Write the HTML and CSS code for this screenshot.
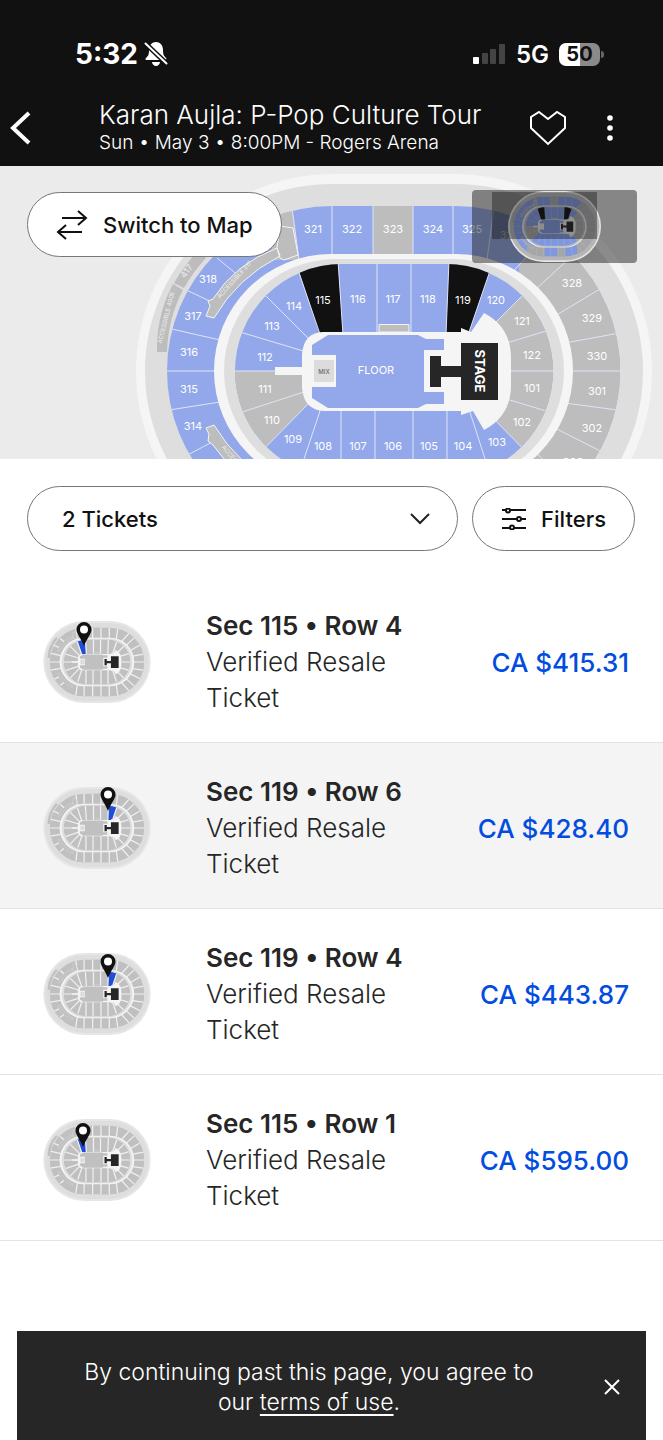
FILE: index.html
```html
<!DOCTYPE html>
<html lang="en">
<head>
<meta charset="utf-8">
<meta name="viewport" content="width=device-width, initial-scale=1">
<title>Karan Aujla: P-Pop Culture Tour</title>
<link rel="stylesheet" href="styles.css">
</head>
<body>
<svg class="defs" aria-hidden="true">
  <defs>
    <clipPath id="clip-upper"><rect x="167" y="206" width="453" height="330" rx="165"/></clipPath>
    <clipPath id="clip-bowl"><rect x="235" y="264" width="318" height="214" rx="107"/></clipPath>
    <symbol id="arena" viewBox="136 174 516 394">
      <rect class="rim outer" x="136" y="174" width="516" height="394" rx="197"/>
      <rect class="walk" x="145" y="184" width="498" height="374" rx="187"/>
      <!-- 400 level -->
      <path class="off" d="M157 352V345Q158 312 173 284L183 290Q168 318 167 352ZM174 283Q184 266 197 252L206 258Q193 272 184 288Z"/>
      <!-- 300 level -->
      <rect class="open" x="167" y="206" width="453" height="330" rx="165"/>
      <g clip-path="url(#clip-upper)">
        <path class="off" d="M373 200H413V260H373ZM280 200H291L299 260H270ZM559 220L519 265V540H650V220ZM240 480H340V540H240ZM410 480H452V540H410Z"/>
        <g class="lines">
          <path d="M291 200L299 260M332 200V260M373 200V260M413 200V260M453 200V260M495 200L487 260M559 220L510 275M573 255L535 290M610 283L555 316M625 332L565 343M560 371H625M625 411L565 403M610 456L555 428M573 487L535 452M559 522L510 467M217 258L240 277M167 281L214 303M163 327L220 340M163 371H220M163 411L220 402M180 459L218 439M217 484L240 465M291 542L299 482M332 480V542M373 480V542M413 480V542M453 480V542M495 542L487 482"/>
        </g>
      </g>
      <rect class="rim" x="214" y="254" width="359" height="234" rx="117"/>
      <path class="off edge" d="M277 248L280 258L284 260L298 255L293 228L280 226ZM277 248Q235 264 213 299L208 301L210 306L206 316L214 318Q237 278 280 256ZM208 441L209 434L206 428L214 425Q237 464 280 487L277 495Q235 478 213 445Z"/>
      <rect class="walk" x="224" y="259" width="340" height="224" rx="112"/>
      <!-- 100 level -->
      <rect class="open" x="235" y="264" width="318" height="214" rx="107"/>
      <g clip-path="url(#clip-bowl)">
        <path class="off" d="M230 371H310V402L255 458L230 440ZM535 283L490 328V415L535 461H560V283Z"/>
        <path class="pick-115" d="M296 262H338L343 335H320Z"/>
        <path class="pick-119" d="M449 262H493L468 335H446Z"/>
        <g class="lines">
          <path d="M230 329L310 353M255 285L315 345M296 264L322 340M338 260L343 335M377 260V335M411 260V335M449 260L446 335M493 262L468 335M535 283L490 328M556 328L500 345M500 371H556M556 414L500 397M535 461L490 415M487 465L468 406M447 405V480M413 405V480M375 405V480M341 405V480M302 465L322 405M255 458L315 397M230 416L310 390M230 371H310"/>
        </g>
        <path class="off edge" d="M379 324.500H409V332H379Z"/>
      </g>
      <path class="rim" d="M275 367H302V354Q304 332 324 332H461V328L471 332L484 313Q511 327 511 358V385Q511 416 484 430L473 411L461 415V411H324Q304 410 302 388V375H275Z"/>
      <path class="open" d="M312 345L328 335H418L426 339H444V350H424V392H444V404H426L418 408H328L312 398V387H336V355H312Z"/>
      <rect class="mix" x="314" y="360" width="20" height="22"/>
      <path class="stage" d="M430 356H441V366H461V343H498V400H461V377H441V387H430Z"/>
    </symbol>
    <symbol id="pin" viewBox="0 0 16 24">
      <path fill="#111" fill-rule="evenodd" d="M8 0A7.500 7.500 0 0 1 15.500 7.500C15.500 12 11 16 8 24C5 16 .5 12 .5 7.500A7.500 7.500 0 0 1 8 0Z"/>
      <circle cx="8" cy="7.500" r="4" fill="#fff"/>
    </symbol>
  </defs>
</svg>

<div class="page">
  <header class="top">
    <div class="status">
      <div class="status-side">
        <span class="clock">5:32</span>
        <svg width="24" height="26" viewBox="0 0 24 26" aria-hidden="true">
          <path fill="#fff" d="M12 1C16 1 19 4 19 9C19 14 20 15 22 17C23 18 22 19 21 19H3C1 19 1 18 2 17C4 15 5 14 5 9C5 4 8 1 12 1ZM8 21H16C16 23 14 25 12 25S8 23 8 21Z"/>
          <path stroke="#111" stroke-width="5" d="M1 2L23 23"/>
          <path stroke="#fff" stroke-width="2" stroke-linecap="round" d="M1.500 2.500L22.500 22.500"/>
        </svg>
      </div>
      <div class="status-side">
        <svg width="34" height="22" viewBox="0 0 34 22" aria-hidden="true">
          <rect x="1" y="14" width="6" height="7" rx="1" fill="#fff"/>
          <g fill="#444"><rect x="10" y="10" width="6" height="11" rx="1"/><rect x="18" y="6" width="6" height="15" rx="1"/><rect x="27" y="1" width="6" height="20" rx="1"/></g>
        </svg>
        <span class="network">5G</span>
        <span class="battery"><span class="battery-body">50</span><span class="battery-cap"></span></span>
      </div>
    </div>
    <div class="bar">
      <button class="icon-btn" aria-label="Back">
        <svg width="24" height="34" viewBox="0 0 24 34" fill="none" stroke="#fff" stroke-width="4"><path d="M21 2L5 17L21 32"/></svg>
      </button>
      <div class="event">
        <h1 class="event-title">Karan Aujla: P-Pop Culture Tour</h1>
        <p class="event-sub">Sun • May 3 • 8:00PM - Rogers Arena</p>
      </div>
      <button class="icon-btn" aria-label="Favourite">
        <svg width="38" height="36" viewBox="0 0 38 36" fill="none" stroke="#fff" stroke-width="2"><path d="M10 2L19 9L28 2L36 7V18L19 34L2 18V7Z"/></svg>
      </button>
      <button class="icon-btn more" aria-label="More options">
        <svg width="8" height="26" viewBox="0 0 8 26" fill="#fff"><circle cx="4" cy="3" r="2.800"/><circle cx="4" cy="13" r="2.800"/><circle cx="4" cy="23" r="2.800"/></svg>
      </button>
    </div>
  </header>

  <main class="main">
    <section class="map" aria-label="Seat map">
      <svg class="map-view" viewBox="0 166 663 293">
        <use href="#arena" x="136" y="174" width="516" height="394"/>
        <g class="labels">
          <text x="313" y="233">321</text><text x="352" y="233">322</text><text x="393" y="233">323</text><text x="433" y="233">324</text><text x="472" y="233">325</text><text x="510" y="239">326</text>
          <text x="208" y="283">318</text><text x="193" y="320">317</text><text x="189" y="356">316</text><text x="189" y="393">315</text><text x="193" y="430">314</text>
          <text x="572" y="287">328</text><text x="592" y="322">329</text><text x="597" y="360">330</text><text x="597" y="395">301</text><text x="592" y="432">302</text><text x="573" y="466">303</text>
          <text x="294" y="310">114</text><text x="272" y="330">113</text><text x="265" y="361">112</text><text x="265" y="393">111</text><text x="272" y="424">110</text><text x="293" y="443">109</text>
          <text x="323" y="304">115</text><text x="358" y="303">116</text><text x="393" y="303">117</text><text x="428" y="303">118</text><text x="463" y="304">119</text><text x="496" y="304">120</text>
          <text x="522" y="325">121</text><text x="532" y="359">122</text><text x="532" y="392">101</text><text x="522" y="426">102</text><text x="497" y="446">103</text>
          <text x="323" y="450">108</text><text x="358" y="450">107</text><text x="393" y="450">106</text><text x="429" y="450">105</text><text x="463" y="450">104</text>
          <text x="376" y="374">FLOOR</text>
        </g>
        <g class="labels tiny">
          <text transform="translate(168 318) rotate(-76)">ACCESSIBLE 400E</text>
          <text transform="translate(236 281) rotate(-48)">ACCESSIBLE 317</text>
          <text transform="translate(237 466) rotate(50)">ACCESSIBLE 314</text>
          <text class="label-417" transform="translate(189 273) rotate(-54)">417</text>
          <text class="label-mix" x="324" y="374">MIX</text>
        </g>
        <text class="label-stage" transform="translate(475 371) rotate(90)">STAGE</text>
        <rect class="mini-back" x="472" y="190" width="165" height="73" rx="4"/>
        <use class="mini-arena" href="#arena" x="508" y="191" width="93" height="71"/>
        <rect class="mini-window" x="492" y="192" width="105" height="47"/>
      </svg>
      <button class="pill switch">
        <svg width="32" height="30" viewBox="0 0 32 30" fill="none" stroke="#111" stroke-width="2"><path d="M6 8H30M22 1L30 8L22 15M26 22H2M10 15L2 22L10 29"/></svg>
        Switch to Map
      </button>
    </section>

    <div class="controls">
      <div class="select-wrap">
        <select class="pill tickets" aria-label="Number of tickets"><option>2 Tickets</option></select>
        <svg class="chevron" width="20" height="12" viewBox="0 0 20 12" fill="none" stroke="#222" stroke-width="2"><path d="M1 1L10 10L19 1"/></svg>
      </div>
      <button class="pill filters">
        <svg width="26" height="22" viewBox="0 0 26 22" fill="#fff" stroke="#111" stroke-width="2"><path d="M1 2H25M1 11H25M1 20H25"/><circle cx="7" cy="2.500" r="2"/><circle cx="18" cy="11" r="2"/><circle cx="11" cy="19.500" r="2"/></svg>
        Filters
      </button>
    </div>

    <ul class="list">
      <li><a class="ticket" href="#t1">
        <svg class="thumb sel-115" viewBox="0 0 110 84"><use href="#arena" x="1" y="1" width="108" height="82"/><use href="#pin" x="34" y="2" width="16" height="24"/></svg>
        <span class="seat"><strong>Sec 115 • Row 4</strong><span>Verified Resale Ticket</span></span>
        <span class="price">CA $415.31</span></a></li>
      <li><a class="ticket active" href="#t2">
        <svg class="thumb sel-119" viewBox="0 0 110 84"><use href="#arena" x="1" y="1" width="108" height="82"/><use href="#pin" x="58" y="1" width="16" height="24"/></svg>
        <span class="seat"><strong>Sec 119 • Row 6</strong><span>Verified Resale Ticket</span></span>
        <span class="price">CA $428.40</span></a></li>
      <li><a class="ticket" href="#t3">
        <svg class="thumb sel-119" viewBox="0 0 110 84"><use href="#arena" x="1" y="1" width="108" height="82"/><use href="#pin" x="58" y="2" width="16" height="24"/></svg>
        <span class="seat"><strong>Sec 119 • Row 4</strong><span>Verified Resale Ticket</span></span>
        <span class="price">CA $443.87</span></a></li>
      <li><a class="ticket" href="#t4">
        <svg class="thumb sel-115" viewBox="0 0 110 84"><use href="#arena" x="1" y="1" width="108" height="82"/><use href="#pin" x="33" y="5" width="16" height="24"/></svg>
        <span class="seat"><strong>Sec 115 • Row 1</strong><span>Verified Resale Ticket</span></span>
        <span class="price">CA $595.00</span></a></li>
    </ul>
  </main>

  <aside class="notice">
    <p class="notice-text">By continuing past this page, you agree to our <a href="#terms">terms of use</a>.</p>
    <button class="icon-btn" aria-label="Dismiss">
      <svg width="16" height="16" viewBox="0 0 16 16" fill="none" stroke="#fff" stroke-width="2"><path d="M1 1L15 15M15 1L1 15"/></svg>
    </button>
  </aside>
</div>
</body>
</html>
```
FILE: styles.css
```css
* { box-sizing: border-box; }
body { margin: 0; background: #fff; color: #262626; font-family: Inter, "Liberation Sans", sans-serif; }
h1, p, ul { margin: 0; padding: 0; }
ul { list-style: none; }
button, select { font: inherit; color: inherit; }
.defs { position: absolute; width: 0; height: 0; }
.page { display: flex; flex-direction: column; min-height: 100vh; }

.top { background: #111; color: #fff; padding: 38px 0 10px; }
.status { display: flex; justify-content: space-between; align-items: center; height: 32px; padding: 0 59px 0 75px; }
.status-side { display: flex; align-items: center; gap: 6px; }
.clock { font-size: 28px; font-weight: 700; }
.network { font-size: 24px; font-weight: 600; margin: 0 4px; }
.battery { display: flex; align-items: center; gap: 1px; }
.battery-body { width: 41px; height: 23px; border-radius: 7px; background: linear-gradient(90deg, #fff 50%, #8a8a8a 50%); color: #111; font-size: 20px; line-height: 23px; font-weight: 700; text-align: center; }
.battery-cap { width: 3px; height: 7px; border-radius: 0 3px 3px 0; background: #666; }
.bar { display: flex; align-items: center; padding: 30px 49px 0 8px; }
.event { flex: 1; padding-left: 67px; }
.event-title { font-size: 26px; line-height: 30px; font-weight: 300; }
.event-sub { font-size: 19px; line-height: 26px; font-weight: 300; }
.icon-btn { display: flex; padding: 0; border: 0; background: none; cursor: pointer; }
.more { margin-left: 39px; }

.map { position: relative; background: #ebebeb; }
.map-view { display: block; width: 100%; --open: #93a8eb; --off: #bdbdbd; --walk: #dedede; --rim: #f5f5f5; --line: 1px; --pick: #111; }
.rim { fill: var(--rim); }
.outer { fill: var(--outer, var(--rim)); }
.walk { fill: var(--walk); }
.open { fill: var(--open); }
.off { fill: var(--off); }
.edge { stroke: var(--rim); stroke-width: 1px; }
.lines { fill: none; stroke: var(--divider, #dfe4f6); stroke-width: var(--line); }
.pick-115 { fill: var(--pick-115, var(--pick)); }
.pick-119 { fill: var(--pick-119, var(--pick)); }
.mix { fill: #dcdcdc; }
.stage { fill: #262626; }
.labels { fill: #fff; font-size: 11px; text-anchor: middle; }
.tiny { font-size: 6px; fill: #eee; }
.label-417 { font-size: 9px; }
.label-mix { fill: #777; font-weight: 600; }
.label-stage { fill: #fff; font-size: 13px; font-weight: 700; text-anchor: middle; }
.mini-back { fill: #222; fill-opacity: .5; }
.mini-arena { --open: #7f97dd; --off: #a6a6a6; --walk: #b5b5b5; --rim: #e4e4e4; }
.mini-window { fill: #111; fill-opacity: .4; }

.pill { display: flex; align-items: center; height: 65px; border: 1px solid #777; border-radius: 33px; background: #fff; color: #111; font-size: 22px; font-weight: 500; cursor: pointer; }
.switch { position: absolute; left: 27px; top: 26px; gap: 15px; padding: 0 28px; }
.controls { display: flex; gap: 14px; padding: 27px 28px 26px 27px; }
.select-wrap { position: relative; flex: 1; }
.tickets { width: 100%; padding: 0 34px; appearance: none; }
.chevron { position: absolute; right: 28px; top: 27px; pointer-events: none; }
.filters { gap: 14px; padding: 0 28px; }

.ticket { display: flex; align-items: center; padding: 31px 34px 26px 42px; border-bottom: 1px solid #e3e3e3; color: inherit; text-decoration: none; }
.active { background: #f4f4f4; }
.thumb { width: 110px; height: 84px; --open: #c0c0c0; --off: #c0c0c0; --walk: #dedede; --outer: #e6e6e6; --rim: #f4f4f4; --divider: #f0f0f0; --line: 6px; --pick: #c0c0c0; }
.sel-115 { --pick-115: #1f4fd6; }
.sel-119 { --pick-119: #1f4fd6; }
.seat { display: flex; flex-direction: column; width: 200px; margin-left: 54px; margin-right: auto; font-size: 26px; line-height: 36px; font-weight: 300; }
.seat strong { font-weight: 600; white-space: nowrap; }
.price { color: #024ddf; font-size: 26px; font-weight: 500; white-space: nowrap; }

.notice { display: flex; align-items: center; margin: auto 17px 0; padding: 26px 26px 23px 52px; background: #262626; color: #fff; }
.notice-text { flex: 1; padding-right: 55px; font-size: 23px; line-height: 30px; font-weight: 300; text-align: center; }
.notice a { color: inherit; text-underline-offset: 4px; }
```
